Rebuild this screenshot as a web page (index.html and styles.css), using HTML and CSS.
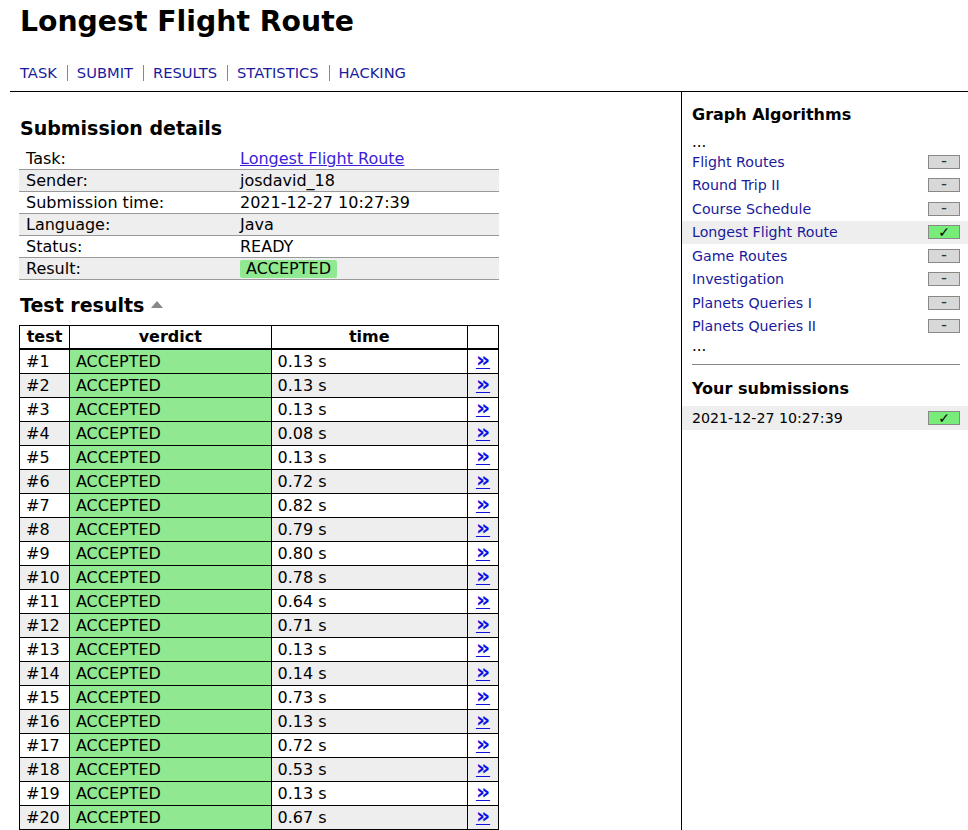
FILE: index.html
```html
<!DOCTYPE html>
<html>
<head>
<meta charset="utf-8">
<link rel="stylesheet" href="styles.css">
</head>
<body>
<div class="skeleton">
  <div class="header">
    <h1 class="title">Longest Flight Route</h1>
    <nav class="nav">
      <a href="#">TASK</a><span class="sep"></span>
      <a href="#">SUBMIT</a><span class="sep"></span>
      <a href="#">RESULTS</a><span class="sep"></span>
      <a href="#">STATISTICS</a><span class="sep"></span>
      <a href="#">HACKING</a>
    </nav>
  </div>
  <div class="body">
    <div class="content">
      <h3 class="h3 sd-head">Submission details</h3>
      <table class="summary">
        <tr><td class="lbl">Task:</td><td><a class="tasklink" href="#">Longest Flight Route</a></td></tr>
        <tr><td class="lbl">Sender:</td><td>josdavid_18</td></tr>
        <tr><td class="lbl">Submission time:</td><td>2021-12-27 10:27:39</td></tr>
        <tr><td class="lbl">Language:</td><td>Java</td></tr>
        <tr><td class="lbl">Status:</td><td>READY</td></tr>
        <tr><td class="lbl">Result:</td><td><span class="badge">ACCEPTED</span></td></tr>
      </table>
      <h3 class="h3 tr-head">Test results <span class="tri"></span></h3>
      <table class="tests">
        <thead>
          <tr><th class="c-test">test</th><th class="c-verdict">verdict</th><th class="c-time">time</th><th class="c-link"></th></tr>
        </thead>
        <tbody>
          <tr><td>#1</td><td class="ok">ACCEPTED</td><td>0.13 s</td><td class="lnk"><a href="#">»</a></td></tr>
          <tr><td>#2</td><td class="ok">ACCEPTED</td><td>0.13 s</td><td class="lnk"><a href="#">»</a></td></tr>
          <tr><td>#3</td><td class="ok">ACCEPTED</td><td>0.13 s</td><td class="lnk"><a href="#">»</a></td></tr>
          <tr><td>#4</td><td class="ok">ACCEPTED</td><td>0.08 s</td><td class="lnk"><a href="#">»</a></td></tr>
          <tr><td>#5</td><td class="ok">ACCEPTED</td><td>0.13 s</td><td class="lnk"><a href="#">»</a></td></tr>
          <tr><td>#6</td><td class="ok">ACCEPTED</td><td>0.72 s</td><td class="lnk"><a href="#">»</a></td></tr>
          <tr><td>#7</td><td class="ok">ACCEPTED</td><td>0.82 s</td><td class="lnk"><a href="#">»</a></td></tr>
          <tr><td>#8</td><td class="ok">ACCEPTED</td><td>0.79 s</td><td class="lnk"><a href="#">»</a></td></tr>
          <tr><td>#9</td><td class="ok">ACCEPTED</td><td>0.80 s</td><td class="lnk"><a href="#">»</a></td></tr>
          <tr><td>#10</td><td class="ok">ACCEPTED</td><td>0.78 s</td><td class="lnk"><a href="#">»</a></td></tr>
          <tr><td>#11</td><td class="ok">ACCEPTED</td><td>0.64 s</td><td class="lnk"><a href="#">»</a></td></tr>
          <tr><td>#12</td><td class="ok">ACCEPTED</td><td>0.71 s</td><td class="lnk"><a href="#">»</a></td></tr>
          <tr><td>#13</td><td class="ok">ACCEPTED</td><td>0.13 s</td><td class="lnk"><a href="#">»</a></td></tr>
          <tr><td>#14</td><td class="ok">ACCEPTED</td><td>0.14 s</td><td class="lnk"><a href="#">»</a></td></tr>
          <tr><td>#15</td><td class="ok">ACCEPTED</td><td>0.73 s</td><td class="lnk"><a href="#">»</a></td></tr>
          <tr><td>#16</td><td class="ok">ACCEPTED</td><td>0.13 s</td><td class="lnk"><a href="#">»</a></td></tr>
          <tr><td>#17</td><td class="ok">ACCEPTED</td><td>0.72 s</td><td class="lnk"><a href="#">»</a></td></tr>
          <tr><td>#18</td><td class="ok">ACCEPTED</td><td>0.53 s</td><td class="lnk"><a href="#">»</a></td></tr>
          <tr><td>#19</td><td class="ok">ACCEPTED</td><td>0.13 s</td><td class="lnk"><a href="#">»</a></td></tr>
          <tr><td>#20</td><td class="ok">ACCEPTED</td><td>0.67 s</td><td class="lnk"><a href="#">»</a></td></tr>
        </tbody>
      </table>
    </div>
    <div class="nav-sidebar">
      <h4 class="h4">Graph Algorithms</h4>
      <div class="dots">...</div>
      <ul class="task-list">
        <li><a href="#">Flight Routes</a><span class="score none">–</span></li>
        <li><a href="#">Round Trip II</a><span class="score none">–</span></li>
        <li><a href="#">Course Schedule</a><span class="score none">–</span></li>
        <li class="current"><a href="#">Longest Flight Route</a><span class="score full">✓</span></li>
        <li><a href="#">Game Routes</a><span class="score none">–</span></li>
        <li><a href="#">Investigation</a><span class="score none">–</span></li>
        <li><a href="#">Planets Queries I</a><span class="score none">–</span></li>
        <li><a href="#">Planets Queries II</a><span class="score none">–</span></li>
      </ul>
      <div class="dots">...</div>
      <hr class="hr">
      <h4 class="h4 h4-sub">Your submissions</h4>
      <ul class="task-list">
        <li class="current"><a class="sub" href="#">2021-12-27 10:27:39</a><span class="score full">✓</span></li>
      </ul>
    </div>
  </div>
</div>
</body>
</html>
```

FILE: styles.css
```css
html, body {
  margin: 0;
  padding: 0;
  background: #fff;
  color: #000;
  font-family: "DejaVu Sans", Verdana, sans-serif;
  font-size: 15px;
}
.skeleton {
  padding-left: 10px;
}
.header {
  padding: 0 10px;
  border-bottom: 1px solid #000;
}
.title {
  margin: 0;
  padding-top: 6px;
  font-size: 28.3px;
  font-weight: bold;
  line-height: 32px;
}
.nav {
  display: flex;
  align-items: center;
  padding: 27px 0 10px;
  font-size: 14.7px;
  line-height: 16px;
}
.nav a {
  color: #1a1a9c;
  text-decoration: none;
}
.nav .sep {
  display: inline-block;
  width: 1px;
  height: 16px;
  background: #888;
  margin: 0 9px 0 10px;
}
.body {
  display: flex;
  align-items: stretch;
  min-height: 740px;
}
.content {
  width: 672px;
  padding: 0 0 0 9px;
  box-sizing: border-box;
  border-right: 1px solid #000;
}
.h3 {
  margin: 0;
  font-size: 19px;
  font-weight: bold;
  line-height: 24px;
  padding-left: 1px;
}
.sd-head {
  padding-top: 24px;
  padding-bottom: 8px;
}
.summary {
  border-collapse: collapse;
  width: 480px;
  font-size: 16px;
}
.summary td {
  padding: 0 0 0 7px;
  height: 21px;
  line-height: 21px;
  border-bottom: 1px solid #999;
}
.summary td.lbl {
  width: 214px;
}
.summary td:last-child {
  padding-left: 0;
}
.summary tr:nth-child(even) td {
  background: #eee;
}
.tasklink {
  color: #3a1ed8;
  text-decoration: underline;
}
.badge {
  display: inline-block;
  background: #90e890;
  padding: 0 6px;
  border-radius: 2px;
  line-height: 18px;
}
.tr-head {
  padding-top: 13px;
  padding-bottom: 8px;
  display: flex;
  align-items: center;
}
.tri {
  display: inline-block;
  width: 0;
  height: 0;
  border-left: 6px solid transparent;
  border-right: 6px solid transparent;
  border-bottom: 7px solid #888;
  margin-left: 7px;
  margin-top: -2px;
}
.tests {
  border-collapse: collapse;
  width: 480px;
  font-size: 16px;
}
.tests th {
  font-weight: bold;
  border: 1px solid #000;
  border-bottom: 2px solid #000;
  height: 22px;
  padding: 0;
  line-height: 22px;
}
.tests td {
  border: 1px solid #000;
  height: 23px;
  line-height: 23px;
  padding: 0 0 0 6px;
  box-sizing: border-box;
}
.tests tbody tr:nth-child(even) td {
  background: #eee;
}
.tests td.ok, .tests tbody tr:nth-child(even) td.ok {
  background: #90e890;
}
.c-test { width: 49px; }
.c-verdict { width: 201px; }
.c-time { width: 196px; }
.c-link { width: 30px; }
.tests td.lnk {
  text-align: center;
  padding: 0;
}
.tests td.lnk a {
  display: inline-block;
  vertical-align: top;
  height: 20px;
  line-height: 20px;
  color: #1010e0;
  font-weight: bold;
  font-size: 22px;
  text-decoration: underline;
  text-decoration-thickness: 1px;
}
.nav-sidebar {
  flex: 1;
  padding: 0 8px 0 0;
}
.h4 {
  margin: 0;
  font-size: 16px;
  font-weight: bold;
  padding: 13px 0 9px 10px;
  line-height: 20px;
}
.h4-sub {
  padding: 14px 0 7px 10px;
}
.dots {
  padding-left: 10px;
  line-height: 16px;
  font-size: 15px;
}
.task-list {
  list-style: none;
  margin: 0;
  padding: 0;
}
.task-list li {
  display: flex;
  align-items: center;
  justify-content: space-between;
  height: 23.5px;
  padding-left: 10px;
  margin-right: -8px;
  padding-right: 8px;
  font-size: 14.2px;
}
.task-list li.current {
  background: #eee;
}
.task-list a {
  color: #1a1a9c;
  text-decoration: none;
}
.task-list a.sub {
  color: #000;
}
.score {
  display: inline-block;
  width: 30px;
  height: 12px;
  border: 1px solid #888;
  font-size: 11px;
  line-height: 12px;
  text-align: center;
  font-weight: bold;
}
.score.none {
  background: #d8d8d8;
  color: #333;
}
.score.full {
  background: #78ec78;
  color: #000;
  font-size: 14px;
}
.hr {
  border: 0;
  border-top: 1px solid #888;
  margin: 10px 0 0 10px;
}
```
